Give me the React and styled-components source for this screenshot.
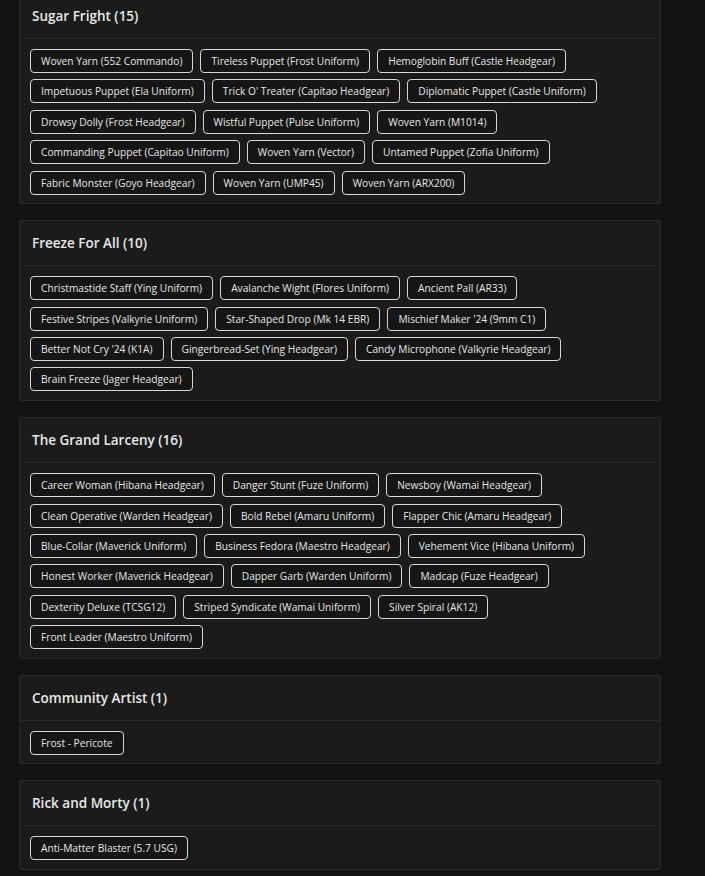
import React from 'react'
import styled, { createGlobalStyle } from 'styled-components'

const collections = [
    {
        name: 'Sugar Fright',
        items: [
            'Woven Yarn (552 Commando)', 'Tireless Puppet (Frost Uniform)', 'Hemoglobin Buff (Castle Headgear)',
            'Impetuous Puppet (Ela Uniform)', "Trick O' Treater (Capitao Headgear)", 'Diplomatic Puppet (Castle Uniform)',
            'Drowsy Dolly (Frost Headgear)', 'Wistful Puppet (Pulse Uniform)', 'Woven Yarn (M1014)',
            'Commanding Puppet (Capitao Uniform)', 'Woven Yarn (Vector)', 'Untamed Puppet (Zofia Uniform)',
            'Fabric Monster (Goyo Headgear)', 'Woven Yarn (UMP45)', 'Woven Yarn (ARX200)',
        ],
    },
    {
        name: 'Freeze For All',
        items: [
            'Christmastide Staff (Ying Uniform)', 'Avalanche Wight (Flores Uniform)', 'Ancient Pall (AR33)',
            'Festive Stripes (Valkyrie Uniform)', 'Star-Shaped Drop (Mk 14 EBR)', "Mischief Maker '24 (9mm C1)",
            "Better Not Cry '24 (K1A)", 'Gingerbread-Set (Ying Headgear)', 'Candy Microphone (Valkyrie Headgear)',
            'Brain Freeze (Jager Headgear)',
        ],
    },
    {
        name: 'The Grand Larceny',
        items: [
            'Career Woman (Hibana Headgear)', 'Danger Stunt (Fuze Uniform)', 'Newsboy (Wamai Headgear)',
            'Clean Operative (Warden Headgear)', 'Bold Rebel (Amaru Uniform)', 'Flapper Chic (Amaru Headgear)',
            'Blue-Collar (Maverick Uniform)', 'Business Fedora (Maestro Headgear)', 'Vehement Vice (Hibana Uniform)',
            'Honest Worker (Maverick Headgear)', 'Dapper Garb (Warden Uniform)', 'Madcap (Fuze Headgear)',
            'Dexterity Deluxe (TCSG12)', 'Striped Syndicate (Wamai Uniform)', 'Silver Spiral (AK12)',
            'Front Leader (Maestro Uniform)',
        ],
    },
    { name: 'Community Artist', items: ['Frost - Pericote'] },
    { name: 'Rick and Morty', items: ['Anti-Matter Blaster (5.7 USG)'] },
]

const App = () => {
    return (
        <>
            <GlobalStyle />
            <Page>
                {collections.map(c => (
                    <Card key={c.name}>
                        <CardHeader>{c.name} ({c.items.length})</CardHeader>
                        <CardBody>
                            {c.items.map(item => (
                                <Chip key={item}>{item}</Chip>
                            ))}
                        </CardBody>
                    </Card>
                ))}
            </Page>
        </>
    )
}

const GlobalStyle = createGlobalStyle`
body{
    margin: 0;
    background: #131313;
    font-family: "Open Sans", "Liberation Sans", sans-serif;
}
`
const Page = styled.div`
width: 642px;
margin: -7px 0 0 19px;
display: flex;
flex-direction: column;
gap: 16px;
`
const Card = styled.div`
background: #1b1b1b;
border: 1px solid #2a2a2a;
border-radius: 3px;
`
const CardHeader = styled.div`
height: 44px;
padding: 0 12px;
display: flex;
align-items: center;
color: #e8e8e8;
font-size: 13.5px;
font-weight: 600;
border-bottom: 1px solid #2a2a2a;
`
const CardBody = styled.div`
padding: 10px 10px 8.7px;
display: flex;
flex-wrap: wrap;
gap: 6.4px 7px;
`
const Chip = styled.div`
height: 24px;
padding: 0 10px;
display: flex;
align-items: center;
box-sizing: border-box;
background: #161616;
color: #e6e6e6;
font-size: 10.2px;
border: 1px solid #d8d8d8;
border-radius: 4px;
white-space: nowrap;
`

export default App
